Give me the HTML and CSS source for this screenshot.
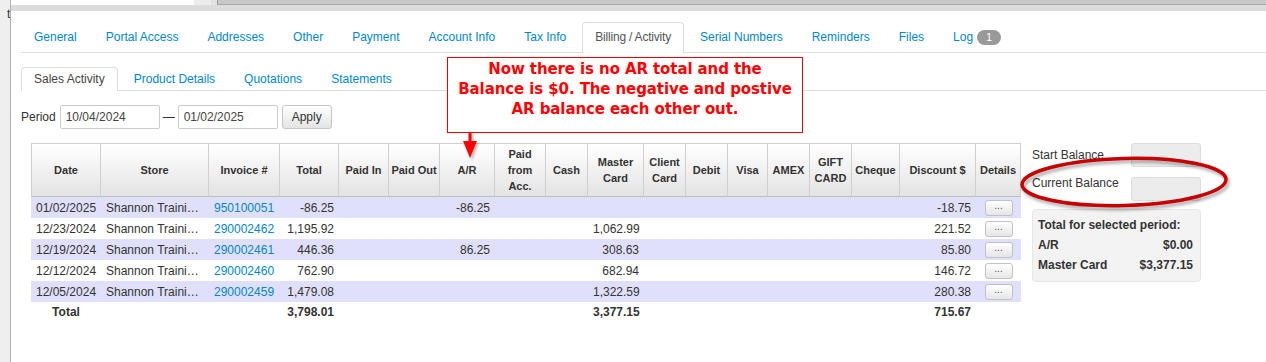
FILE: index.html
```html
<!DOCTYPE html>
<html>
<head>
<meta charset="utf-8">
<link rel="stylesheet" href="styles.css">
</head>
<body>
<div class="page">
  <div class="gutter"><span class="gutter-t">t</span></div>
  <div class="main">
    <div class="topbar">
      <div class="tb-row1"><div class="tb-white"></div><div class="tb-gray"></div><div class="tb-gray2"></div><div class="tb-bar"></div></div>
      <div class="tb-row2"></div>
    </div>
    <div class="content">
      <nav class="tabs">
        <a class="tab">General</a>
        <a class="tab">Portal Access</a>
        <a class="tab">Addresses</a>
        <a class="tab">Other</a>
        <a class="tab">Payment</a>
        <a class="tab">Account Info</a>
        <a class="tab">Tax Info</a>
        <a class="tab active">Billing / Activity</a>
        <a class="tab">Serial Numbers</a>
        <a class="tab">Reminders</a>
        <a class="tab">Files</a>
        <a class="tab">Log<span class="badge">1</span></a>
      </nav>
      <nav class="subtabs">
        <a class="subtab active">Sales Activity</a>
        <a class="subtab">Product Details</a>
        <a class="subtab">Quotations</a>
        <a class="subtab">Statements</a>
      </nav>
      <div class="period">
        <span class="period-label">Period</span>
        <input class="date-input" type="text" value="10/04/2024">
        <span class="dash">—</span>
        <input class="date-input" type="text" value="01/02/2025">
        <button class="apply">Apply</button>
      </div>
      <div class="work">
        <table class="grid">
          <colgroup>
            <col class="w70"><col class="w108"><col class="w71"><col class="w59"><col class="w50"><col class="w51">
            <col class="w55"><col class="w51"><col class="w42"><col class="w56"><col class="w42"><col class="w42">
            <col class="w40"><col class="w42"><col class="w42"><col class="w48"><col class="w76"><col class="w45">
          </colgroup>
          <thead>
            <tr>
              <th>Date</th><th>Store</th><th>Invoice #</th><th>Total</th><th>Paid In</th><th>Paid Out</th>
              <th>A/R</th><th>Paid<br>from<br>Acc.</th><th>Cash</th><th>Master<br>Card</th><th>Client<br>Card</th><th>Debit</th>
              <th>Visa</th><th>AMEX</th><th>GIFT<br>CARD</th><th>Cheque</th><th>Discount $</th><th>Details</th>
            </tr>
          </thead>
          <tbody>
            <tr class="alt">
              <td>01/02/2025</td><td class="store">Shannon Traini…</td><td><a class="link">950100051</a></td><td class="num">-86.25</td><td></td><td></td>
              <td class="num">-86.25</td><td></td><td></td><td></td><td></td><td></td>
              <td></td><td></td><td></td><td></td><td class="num">-18.75</td><td class="det"><button class="dots">...</button></td>
            </tr>
            <tr>
              <td>12/23/2024</td><td class="store">Shannon Traini…</td><td><a class="link">290002462</a></td><td class="num">1,195.92</td><td></td><td></td>
              <td></td><td></td><td></td><td class="num">1,062.99</td><td></td><td></td>
              <td></td><td></td><td></td><td></td><td class="num">221.52</td><td class="det"><button class="dots">...</button></td>
            </tr>
            <tr class="alt">
              <td>12/19/2024</td><td class="store">Shannon Traini…</td><td><a class="link">290002461</a></td><td class="num">446.36</td><td></td><td></td>
              <td class="num">86.25</td><td></td><td></td><td class="num">308.63</td><td></td><td></td>
              <td></td><td></td><td></td><td></td><td class="num">85.80</td><td class="det"><button class="dots">...</button></td>
            </tr>
            <tr>
              <td>12/12/2024</td><td class="store">Shannon Traini…</td><td><a class="link">290002460</a></td><td class="num">762.90</td><td></td><td></td>
              <td></td><td></td><td></td><td class="num">682.94</td><td></td><td></td>
              <td></td><td></td><td></td><td></td><td class="num">146.72</td><td class="det"><button class="dots">...</button></td>
            </tr>
            <tr class="alt">
              <td>12/05/2024</td><td class="store">Shannon Traini…</td><td><a class="link">290002459</a></td><td class="num">1,479.08</td><td></td><td></td>
              <td></td><td></td><td></td><td class="num">1,322.59</td><td></td><td></td>
              <td></td><td></td><td></td><td></td><td class="num">280.38</td><td class="det"><button class="dots">...</button></td>
            </tr>
            <tr class="total">
              <td class="center">Total</td><td></td><td></td><td class="num">3,798.01</td><td></td><td></td>
              <td></td><td></td><td></td><td class="num">3,377.15</td><td></td><td></td>
              <td></td><td></td><td></td><td></td><td class="num">715.67</td><td></td>
            </tr>
          </tbody>
        </table>
        <aside class="side">
          <div class="bal-row"><span class="bal-label">Start Balance</span><span class="bal-box"></span></div>
          <div class="bal-row second"><span class="bal-label top">Current Balance</span><span class="bal-box"></span></div>
          <div class="totals">
            <div class="totals-title">Total for selected period:</div>
            <div class="totals-row"><span>A/R</span><span>$0.00</span></div>
            <div class="totals-row"><span>Master Card</span><span>$3,377.15</span></div>
          </div>
        </aside>
      </div>
    </div>
  </div>

  <div class="note">Now there is no AR total and the<br>Balance is $0. The negative and postive<br>AR balance each other out.</div>
  <svg class="arrow" width="20" height="28" viewBox="0 0 20 28">
    <rect x="8.5" y="0" width="3" height="10" fill="#ff0000"/>
    <polygon points="3,9 17,9 10,26" fill="#ff0000"/>
  </svg>
  <svg class="ring" width="224" height="60" viewBox="0 0 224 60">
    <ellipse cx="111" cy="29" rx="102" ry="23.5" fill="none" stroke="#c70000" stroke-width="3.5" transform="rotate(-1.5 111 29)"/>
  </svg>
</div>
</body>
</html>
```
FILE: styles.css
```css
* { box-sizing: border-box; }
body {
  margin: 0;
  font-family: "Liberation Sans", Arial, sans-serif;
  font-size: 12px;
  color: #333;
  background: #fff;
}
.page {
  position: relative;
  display: flex;
  min-height: 362px;
}
.gutter {
  flex: none;
  width: 11px;
  background: #efefef;
  border-right: 1px solid #b0b0b0;
  overflow: hidden;
}
.gutter-t {
  display: block;
  margin: 9px 0 0 7px;
  font-size: 12px;
  line-height: 10px;
  color: #333;
}
.main {
  flex: 1;
  min-width: 0;
}
.tb-row1 {
  display: flex;
  height: 5px;
}
.tb-white { width: 183px; background: #fff; }
.tb-gray { width: 17px; background: #ececec; }
.tb-gray2 { width: 6px; background: #e2e2e2; }
.tb-bar {
  flex: 1;
  background: #c8c8c8;
  border-left: 1px solid #9a9a9a;
  border-bottom: 1px solid #a8a8a8;
}
.tb-row2 {
  height: 6px;
  background: #dcdcdc;
}
.content {
  padding-left: 10px;
}
.tabs {
  display: flex;
  margin-top: 11px;
  border-bottom: 1px solid #ddd;
}
.tab {
  display: flex;
  align-items: center;
  height: 31px;
  padding: 0 12px 2px;
  margin-right: 3px;
  margin-bottom: -1px;
  border: 1px solid transparent;
  border-bottom: none;
  border-radius: 4px 4px 0 0;
  color: #0088cc;
  font-size: 12px;
}
.tab.active {
  border-color: #ddd;
  background: #fff;
  color: #555;
  letter-spacing: -0.2px;
}
.badge {
  display: inline-block;
  margin-left: 4px;
  width: 24px;
  height: 15px;
  line-height: 15px;
  border-radius: 8px;
  background: #999;
  color: #fff;
  font-size: 11px;
  text-align: center;
}
.subtabs {
  display: flex;
  margin-top: 14px;
  border-bottom: 1px solid #ddd;
}
.subtab {
  display: block;
  height: 24px;
  line-height: 22px;
  padding: 0 12px;
  margin-right: 3px;
  margin-bottom: -1px;
  border: 1px solid transparent;
  border-bottom: none;
  border-radius: 4px 4px 0 0;
  color: #0088cc;
}
.subtab.active {
  border-color: #ddd;
  background: #fff;
  color: #444;
}
.period {
  display: flex;
  align-items: center;
  margin-top: 14px;
  height: 24px;
}
.period-label {
  margin-right: 4px;
  color: #333;
}
.date-input {
  width: 100px;
  height: 24px;
  padding: 0 5px;
  border: 1px solid #ccc;
  border-radius: 2px;
  font-family: inherit;
  font-size: 12px;
  color: #444;
}
.dash {
  margin: 0 3px;
  color: #333;
}
.apply {
  margin-left: 4px;
  width: 50px;
  height: 24px;
  border: 1px solid #c6c6c6;
  border-radius: 3px;
  background: linear-gradient(#ffffff, #e4e4e4);
  font-family: inherit;
  font-size: 12px;
  color: #333;
  padding: 0;
}
.work {
  display: flex;
  align-items: flex-start;
  gap: 11px;
  margin-top: 14px;
  padding-left: 10px;
}
.grid {
  flex: none;
  width: 990px;
  table-layout: fixed;
  border-collapse: separate;
  border-spacing: 0;
}
.w70 { width: 70px; } .w108 { width: 108px; } .w71 { width: 71px; } .w59 { width: 59px; }
.w50 { width: 50px; } .w51 { width: 51px; } .w55 { width: 55px; } .w42 { width: 42px; }
.w56 { width: 56px; } .w40 { width: 40px; } .w48 { width: 48px; } .w76 { width: 76px; } .w45 { width: 45px; }
.grid th {
  height: 54px;
  padding: 0 2px;
  border-top: 1px solid #cfcfcf;
  border-bottom: 1px solid #bdbdbd;
  border-right: 1px solid #cfcfcf;
  background: linear-gradient(#ffffff, #e3e3e3);
  font-size: 11px;
  font-weight: bold;
  line-height: 16px;
  color: #333;
  text-align: center;
  vertical-align: middle;
}
.grid th:first-child { border-left: 1px solid #cfcfcf; }
.grid td {
  height: 21px;
  padding: 0 5px;
  white-space: nowrap;
  color: #333;
  vertical-align: middle;
}
.grid tr.alt td { background: #e0e0fc; }
.grid td.num { text-align: right; }
.grid td.center { text-align: center; }
.grid td.det { text-align: center; padding: 0; }
.grid tr.total td { font-weight: bold; height: 20px; }
.link { color: #0088cc; }
.dots {
  width: 28px;
  height: 16px;
  padding: 0 0 4px;
  border: 1px solid #c2c2c2;
  border-radius: 3px;
  background: linear-gradient(#ffffff, #e6e6e6);
  font-family: inherit;
  font-size: 10px;
  line-height: 10px;
  color: #555;
  vertical-align: middle;
}
.side {
  flex: none;
  width: 169px;
  display: flex;
  flex-direction: column;
}
.bal-row {
  display: flex;
  justify-content: space-between;
  align-items: center;
  height: 24px;
}
.bal-row.second { margin-top: 10px; }
.bal-label { color: #333; }
.bal-label.top { align-self: flex-start; line-height: 13px; }
.bal-box {
  width: 70px;
  height: 24px;
  border: 1px solid #dcdcdc;
  border-radius: 3px;
  background: #ececec;
}
.totals {
  margin-top: 8px;
  padding: 5px 7px 6px 5px;
  border: 1px solid #e6e6e6;
  border-radius: 4px;
  background: #f3f3f3;
  font-weight: bold;
  color: #333;
}
.totals-title, .totals-row { line-height: 20px; }
.totals-row {
  display: flex;
  justify-content: space-between;
}
.note {
  position: absolute;
  left: 447px;
  top: 57px;
  width: 356px;
  height: 76px;
  padding-top: 1px;
  border: 1px solid #ee0000;
  background: #fff;
  color: #ff0000;
  font-family: "DejaVu Sans", Verdana, sans-serif;
  font-weight: bold;
  font-size: 15px;
  line-height: 20px;
  letter-spacing: -0.1px;
  text-align: center;
}
.arrow {
  position: absolute;
  left: 460px;
  top: 132px;
  filter: drop-shadow(2px 2px 1px rgba(0,0,0,0.25));
}
.ring {
  position: absolute;
  left: 1013px;
  top: 153px;
  filter: drop-shadow(2px 3px 1.5px rgba(0,0,0,0.3));
}
```
